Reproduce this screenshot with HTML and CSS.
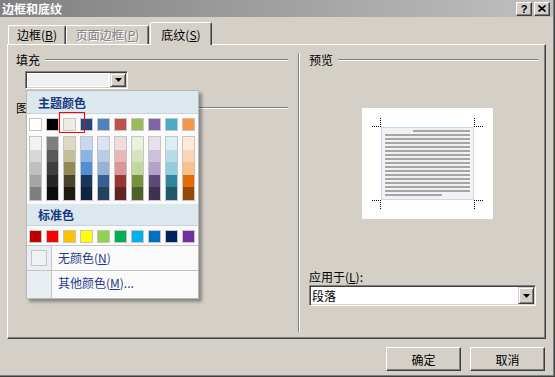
FILE: index.html
```html
<!DOCTYPE html>
<html lang="zh-CN">
<head>
    <meta charset="UTF-8">
    <title>边框和底纹</title>
    <link rel="stylesheet" href="styles.css">
</head>
<body>

<div class="window">
    <div class="titlebar">
        <span class="title">边框和底纹</span>
        <div class="title-buttons">
            <span class="tbtn">?</span>
            <span class="tbtn">
                <svg width="8" height="7" viewBox="0 0 8 7"><path d="M0.5 0.5 L7.5 6.5 M7.5 0.5 L0.5 6.5" stroke="#000" stroke-width="1.7"/></svg>
            </span>
        </div>
    </div>

    <div class="tabs">
        <div class="tab tab-borders">边框(<u>B</u>)</div>
        <div class="tab tab-page disabled">页面边框(<u>P</u>)</div>
        <div class="tab tab-shading active">底纹(<u>S</u>)</div>
    </div>

    <div class="panel">
        <div class="col-left">
            <div class="group-label"><span>填充</span><i class="rule"></i></div>
            <div class="combo fill-combo">
                <div class="combo-value grey"></div>
                <div class="combo-arrow"><svg width="7" height="4" viewBox="0 0 7 4"><polygon points="0,0 7,0 3.5,4" fill="#000"/></svg></div>
            </div>
            <div class="group-label pattern"><span>图案</span><i class="rule"></i></div>
        </div>

        <div class="col-right">
            <div class="group-label"><span>预览</span><i class="rule"></i></div>
            <div class="preview">
                <span class="crop tl"></span>
                <span class="crop tr"></span>
                <span class="crop bl"></span>
                <span class="crop br"></span>
                <div class="page" id="page"></div>
            </div>
            <div class="apply-label">应用于(<u>L</u>):</div>
            <div class="combo apply-combo">
                <div class="combo-value">段落</div>
                <div class="combo-arrow"><svg width="7" height="4" viewBox="0 0 7 4"><polygon points="0,0 7,0 3.5,4" fill="#000"/></svg></div>
            </div>
        </div>
    </div>

    <div class="buttons">
        <button>确定</button>
        <button>取消</button>
    </div>

    <div class="color-menu">
        <div class="menu-head">主题颜色</div>
        <div class="swatch-row" id="themeRow"></div>
        <div class="tint-grid" id="tintGrid"></div>
        <div class="menu-head second">标准色</div>
        <div class="swatch-row std" id="standardRow"></div>
        <div class="menu-item">
            <div class="item-icon"><span class="no-color"></span></div>
            <div class="item-text">无颜色(<u>N</u>)</div>
        </div>
        <div class="menu-item last">
            <div class="item-icon"></div>
            <div class="item-text">其他颜色(<u>M</u>)...</div>
        </div>
    </div>
    <div class="pick-mark"></div>
</div>

<script>
    const theme = ["#ffffff", "#000000", "#eeece1", "#1f497d", "#4f81bd", "#c0504d", "#9bbb59", "#8064a2", "#4bacc6", "#f79646"];
    const tints = [
        ["#f2f2f2", "#d8d8d8", "#bfbfbf", "#a5a5a5", "#7f7f7f"],
        ["#7f7f7f", "#595959", "#3f3f3f", "#262626", "#0c0c0c"],
        ["#ddd9c3", "#c4bd97", "#938953", "#494429", "#1d1b10"],
        ["#c6d9f0", "#8db3e2", "#548dd4", "#17365d", "#0f243e"],
        ["#dbe5f1", "#b8cce4", "#95b3d7", "#366092", "#244061"],
        ["#f2dcdb", "#e5b9b7", "#d99694", "#953734", "#632423"],
        ["#ebf1dd", "#d7e3bc", "#c3d69b", "#76923c", "#4f6128"],
        ["#e5e0ec", "#ccc1d9", "#b2a2c7", "#5f497a", "#3f3151"],
        ["#dbeef3", "#b7dde8", "#92cddc", "#31859b", "#205867"],
        ["#fdeada", "#fbd5b5", "#fac08f", "#e36c09", "#974806"]
    ];
    const standard = ["#c00000", "#ff0000", "#ffc000", "#ffff00", "#92d050", "#00b050", "#00b0f0", "#0070c0", "#002060", "#7030a0"];

    function swatch(color) {
        const s = document.createElement("span");
        s.className = "swatch";
        s.style.background = color;
        return s;
    }

    const themeRow = document.getElementById("themeRow");
    theme.forEach(c => themeRow.appendChild(swatch(c)));

    const tintGrid = document.getElementById("tintGrid");
    tints.forEach(col => {
        const column = document.createElement("div");
        column.className = "tint-col";
        col.forEach(c => {
            const cell = document.createElement("span");
            cell.style.background = c;
            column.appendChild(cell);
        });
        tintGrid.appendChild(column);
    });

    const standardRow = document.getElementById("standardRow");
    standard.forEach(c => standardRow.appendChild(swatch(c)));

    // preview page text lines
    const page = document.getElementById("page");
    for (let i = 0; i < 17; i++) {
        const line = document.createElement("div");
        line.className = "ln" + (i === 0 ? " first" : i === 16 ? " last" : "");
        page.appendChild(line);
    }
</script>

</body>
</html>
```

FILE: styles.css
```css
/* General styles */
* {
    box-sizing: border-box;
}

body {
    margin: 0;
    background: #d4d0c8;
    font-family: "Noto Sans CJK SC", "Liberation Sans", sans-serif;
    font-size: 12px;
    color: #000;
}

u {
    text-decoration: underline;
}

.window {
    position: relative;
    width: 555px;
    height: 377px;
    overflow: hidden;
    background: #d4d0c8;
    box-shadow: inset -1px -1px #404040, inset -2px -2px #808080;
}

/* Title bar */
.titlebar {
    display: flex;
    align-items: center;
    justify-content: space-between;
    width: 553px;
    height: 17px;
    background: linear-gradient(to right, #808080, #c0c0c0);
}

.title {
    color: #fff;
    font-weight: bold;
    padding-left: 2px;
    line-height: 17px;
}

.title-buttons {
    display: flex;
    gap: 2px;
    padding-right: 3px;
}

.tbtn {
    display: flex;
    align-items: center;
    justify-content: center;
    width: 16px;
    height: 14px;
    background: #d4d0c8;
    border: 1px solid;
    border-color: #fff #404040 #404040 #fff;
    box-shadow: inset -1px -1px #808080;
    font: bold 11px "Liberation Sans", sans-serif;
}

/* Tabs */
.tabs {
    position: relative;
    z-index: 2;
    display: flex;
    align-items: flex-end;
    height: 22px;
    margin-top: 5px;
    padding-left: 8px;
}

.tab {
    height: 19px;
    line-height: 18px;
    text-align: center;
    background: #d4d0c8;
    border-top: 1px solid #fff;
    border-left: 1px solid #fff;
    border-right: 1px solid #404040;
    border-radius: 2px 2px 0 0;
    box-shadow: inset -1px 0 #808080;
}

.tab-borders {
    width: 58px;
}

.tab-page {
    width: 83px;
}

.tab-shading {
    width: 62px;
    margin-left: 1px;
}

.tab.disabled {
    color: #808080;
    text-shadow: 1px 1px #fff;
}

.tab.active {
    height: 23px;
    margin-bottom: -1px;
    padding-top: 3px;
    line-height: 18px;
}

/* Tab panel */
.panel {
    display: grid;
    grid-template-columns: 290px 247px;
    width: 539px;
    height: 295px;
    margin-left: 7px;
    border: 1px solid;
    border-color: #fff #404040 #404040 #fff;
    box-shadow: inset -1px -1px #808080;
}

.col-left {
    padding: 8px 10px 0 8px;
}

.col-right {
    height: 279px;
    margin-top: 8px;
    padding: 0 7px 0 11px;
    box-shadow: inset 1px 0 #808080, inset 2px 0 #fff;
}

.group-label {
    display: flex;
    align-items: center;
    height: 13px;
    line-height: 13px;
}

.rule {
    flex: 1;
    margin-left: 5px;
    border-top: 1px solid #808080;
    border-bottom: 1px solid #fff;
}

.group-label.pattern {
    margin-top: 12px;
}

/* Combo boxes */
.combo {
    display: flex;
    padding: 1px;
    background: #fff;
    border: 1px solid;
    border-color: #808080 #fff #fff #808080;
    box-shadow: inset 1px 1px #404040, inset -1px -1px #d4d0c8;
}

.combo-value {
    flex: 1;
    padding-left: 1px;
}

.combo-value.grey {
    margin: 1px 2px 1px 1px;
    background: #f0f0f0;
}

.combo-arrow {
    display: flex;
    align-items: center;
    justify-content: center;
    width: 16px;
    background: #d4d0c8;
    border: 1px solid;
    border-color: #d4d0c8 #404040 #404040 #d4d0c8;
    box-shadow: inset 1px 1px #fff, inset -1px -1px #808080;
}

.fill-combo {
    width: 103px;
    height: 18px;
    margin: 5px 0 0 9px;
}

.apply-label {
    margin-top: 51px;
    line-height: 13px;
}

.apply-combo {
    width: 227px;
    height: 21px;
    margin-top: 2px;
    line-height: 17px;
}

/* Preview */
.preview {
    position: relative;
    width: 131px;
    height: 111px;
    margin: 42px 0 0 53px;
    padding: 19px 0 0 19px;
    background: #fff;
}

.page {
    width: 93px;
    height: 73px;
    padding: 2px 3px;
    background: #f2f2f2;
    border: 1px solid #c6d9f1;
}

.ln {
    width: 85px;
    height: 2px;
    margin-bottom: 2px;
    background: #a6a6a6;
}

.ln.first {
    width: 57px;
    margin-left: 28px;
}

.ln.last {
    width: 57px;
}

.crop {
    position: absolute;
    width: 9px;
    height: 9px;
    border: 0 dotted #000;
}

.crop.tl {
    left: 10px;
    top: 10px;
    border-right-width: 1px;
    border-bottom-width: 1px;
}

.crop.tr {
    left: 112px;
    top: 10px;
    border-left-width: 1px;
    border-bottom-width: 1px;
}

.crop.bl {
    left: 10px;
    top: 92px;
    border-right-width: 1px;
    border-top-width: 1px;
}

.crop.br {
    left: 112px;
    top: 92px;
    border-left-width: 1px;
    border-top-width: 1px;
}

/* Dialog buttons */
.buttons {
    display: flex;
    justify-content: flex-end;
    gap: 9px;
    margin-top: 8px;
    padding-right: 10px;
}

button {
    width: 75px;
    height: 24px;
    padding: 0;
    font-family: "Noto Sans CJK SC", sans-serif;
    font-size: 12px;
    color: #000;
    background: #d4d0c8;
    border: 1px solid;
    border-color: #fff #404040 #404040 #fff;
    box-shadow: inset -1px -1px #808080;
}

/* Colour drop-down */
.color-menu {
    position: absolute;
    left: 26px;
    top: 90px;
    z-index: 5;
    display: flex;
    flex-direction: column;
    width: 173px;
    height: 209px;
    background: #fafafa;
    border: 1px solid #b8b8b8;
    box-shadow: 3px 3px 3px rgba(0, 0, 0, 0.35);
}

.menu-head {
    height: 23px;
    padding: 1px 0 0 11px;
    line-height: 21px;
    font-weight: bold;
    color: #15387f;
    background: #dde7ee;
    border-bottom: 1px solid #c9d3dc;
}

.menu-head.second {
    height: 22px;
    margin-top: 3px;
    line-height: 20px;
}

.swatch-row {
    display: flex;
    gap: 4px;
    padding: 4px 0 0 2px;
}

.swatch {
    width: 13px;
    height: 13px;
    border: 1px solid #c5c5c5;
}

.tint-grid {
    display: flex;
    gap: 4px;
    padding: 5px 0 0 2px;
}

.tint-col {
    display: flex;
    flex-direction: column;
    width: 13px;
    height: 65px;
    border: 1px solid #c5c5c5;
}

.tint-col span {
    flex: 1;
}

.swatch-row.std {
    padding-bottom: 2px;
    border-bottom: 1px solid #c5c5c5;
}

.menu-item {
    display: flex;
    height: 25px;
    border-bottom: 1px solid #c5c5c5;
}

.menu-item.last {
    flex: 1;
    border-bottom: 0;
}

.item-icon {
    width: 25px;
    padding: 4px 0 0 4px;
    background: #e8eef1;
    border-right: 1px solid #c5c5c5;
}

.no-color {
    display: block;
    width: 16px;
    height: 16px;
    background: #eef2f4;
    border: 1px solid #c5c5c5;
}

.item-text {
    padding-left: 6px;
    line-height: 24px;
    color: #1f3b85;
}

.pick-mark {
    position: absolute;
    left: 59px;
    top: 112px;
    z-index: 6;
    width: 26px;
    height: 21px;
    border: 1px solid #f00;
}
```
